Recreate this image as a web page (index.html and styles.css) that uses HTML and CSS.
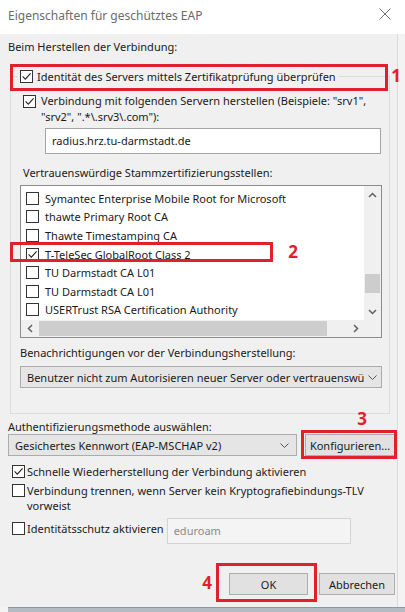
FILE: index.html
```html
<!DOCTYPE html>
<html lang="de">
<head>
  <meta charset="UTF-8" />
  <meta name="viewport" content="width=device-width, initial-scale=1.0"/>
  <title>Eigenschaften für geschütztes EAP</title>
  <link rel="stylesheet" href="styles.css">
</head>
<body>
  <div class="window">
    <div class="titlebar">
      <span class="title">Eigenschaften für geschütztes EAP</span>
      <svg class="close" viewBox="0 0 12 12"><path d="M0.5 0.5L11.5 11.5M11.5 0.5L0.5 11.5"/></svg>
    </div>

    <div class="dialog">
      <p class="label intro">Beim Herstellen der Verbindung:</p>

      <div class="group">
        <div class="group-head">
          <span class="cb"><svg viewBox="0 0 11 11"><path d="M1.6 5.4L4.3 8.2L9.6 2.4"/></svg></span>
          <span>Identität des Servers mittels Zertifikatprüfung überprüfen</span>
        </div>

        <div class="check servers">
          <span class="cb"><svg viewBox="0 0 11 11"><path d="M1.6 5.4L4.3 8.2L9.6 2.4"/></svg></span>
          <span class="check-text">Verbindung mit folgenden Servern herstellen (Beispiele: "srv1",<br>"srv2", ".*\.srv3\.com"):</span>
        </div>
        <div class="textbox server-input">radius.hrz.tu-darmstadt.de</div>

        <p class="label ca-label">Vertrauenswürdige Stammzertifizierungsstellen:</p>
        <div class="listbox">
          <ul class="ca-list">
            <li><span class="cb"></span>Symantec Enterprise Mobile Root for Microsoft</li>
            <li><span class="cb"></span>thawte Primary Root CA</li>
            <li><span class="cb"></span>Thawte Timestamping CA</li>
            <li><span class="cb"><svg viewBox="0 0 11 11"><path d="M1.6 5.4L4.3 8.2L9.6 2.4"/></svg></span>T-TeleSec GlobalRoot Class 2</li>
            <li><span class="cb"></span>TU Darmstadt CA L01</li>
            <li><span class="cb"></span>TU Darmstadt CA L01</li>
            <li><span class="cb"></span>USERTrust RSA Certification Authority</li>
          </ul>
          <div class="vscroll">
            <span class="arrow"><svg viewBox="0 0 9 6"><path d="M1 5L4.5 1.5L8 5"/></svg></span>
            <span class="spacer"></span>
            <span class="thumb"></span>
            <span class="arrow"><svg viewBox="0 0 9 6"><path d="M1 1L4.5 4.5L8 1"/></svg></span>
          </div>
          <div class="hscroll">
            <span class="arrow"><svg class="side" viewBox="0 0 6 9"><path d="M5 1L1.5 4.5L5 8"/></svg></span>
            <span class="thumb"></span>
            <span class="spacer"></span>
            <span class="arrow"><svg class="side" viewBox="0 0 6 9"><path d="M1 1L4.5 4.5L1 8"/></svg></span>
          </div>
          <div class="corner"></div>
        </div>

        <p class="label notify-label">Benachrichtigungen vor der Verbindungsherstellung:</p>
        <div class="select notify">
          <span class="select-text">Benutzer nicht zum Autorisieren neuer Server oder vertrauenswü</span>
          <svg class="chevron" viewBox="0 0 9 5"><path d="M0.5 0.5L4.5 4.5L8.5 0.5"/></svg>
        </div>
      </div>

      <p class="label auth-label">Authentifizierungsmethode auswählen:</p>
      <div class="auth-row">
        <div class="select auth">
          <span class="select-text">Gesichertes Kennwort (EAP-MSCHAP v2)</span>
          <svg class="chevron" viewBox="0 0 9 5"><path d="M0.5 0.5L4.5 4.5L8.5 0.5"/></svg>
        </div>
        <button class="btn configure">Konfigurieren...</button>
      </div>

      <div class="check fast">
        <span class="cb"><svg viewBox="0 0 11 11"><path d="M1.6 5.4L4.3 8.2L9.6 2.4"/></svg></span>
        <span class="check-text">Schnelle Wiederherstellung der Verbindung aktivieren</span>
      </div>
      <div class="check tlv">
        <span class="cb"></span>
        <span class="check-text">Verbindung trennen, wenn Server kein Kryptografiebindungs-TLV<br>vorweist</span>
      </div>
      <div class="check identity">
        <span class="cb"></span>
        <span class="check-text">Identitätsschutz aktivieren</span>
        <div class="textbox disabled">eduroam</div>
      </div>

      <div class="actions">
        <button class="btn ok">OK</button>
        <button class="btn cancel">Abbrechen</button>
      </div>
    </div>
    <div class="taskbar"></div>

    <!-- annotations -->
    <div class="mark mark-1"></div>
    <div class="num num-1">1</div>
    <div class="mark mark-2"></div>
    <div class="num num-2">2</div>
    <div class="mark mark-3"></div>
    <div class="num num-3">3</div>
    <div class="mark mark-4"></div>
    <div class="num num-4">4</div>
  </div>
</body>
</html>
```

FILE: styles.css
```css
* {
  box-sizing: border-box;
}

body {
  margin: 0;
  background: #f3f3f3;
  font-family: "Noto Sans", "Segoe UI", sans-serif;
  font-size: 11px;
  color: #1a1a1a;
}

.window {
  position: relative;
  width: 405px;
  height: 612px;
  display: flex;
  flex-direction: column;
  background: #f3f3f3;
  overflow: hidden;
}

.titlebar {
  height: 34px;
  flex: none;
  background: #fff;
  display: flex;
  align-items: flex-start;
  justify-content: space-between;
  padding: 0 14px 0 8px;
}

.title {
  margin-top: 8px;
  font-size: 12px;
  line-height: 16px;
  color: #6b6b6b;
}

.close {
  margin-top: 8px;
  width: 12px;
  height: 12px;
  fill: none;
  stroke: #707070;
  stroke-width: 1;
}

.dialog {
  flex: 1;
  width: 398px;
  background: #f0f0f0;
  border-right: 1px solid #dadada;
  padding: 5px 2px 0 8px;
}

.label {
  margin: 0;
  line-height: 16px;
}

/* checkbox */
.cb {
  flex: none;
  width: 13px;
  height: 13px;
  border: 1px solid #333;
  background: #fff;
}

.cb svg {
  display: block;
  width: 11px;
  height: 11px;
  fill: none;
  stroke: #222;
  stroke-width: 1.1;
}

/* group box */
.group {
  margin: 21px 5px 0 2px;
  border: 1px solid #dcdcdc;
  padding: 0 9px 25px 9px;
}

.group-head {
  display: flex;
  align-items: center;
  gap: 4px;
  width: fit-content;
  height: 17px;
  margin: -9px 0 0 -2px;
  padding: 0 2px;
  background: #f0f0f0;
  line-height: 17px;
}

.check {
  display: flex;
  align-items: flex-start;
  line-height: 15px;
}

.check .cb {
  margin-top: 1px;
}

.servers {
  margin: 8px 0 0 3px;
  gap: 5px;
  line-height: 16px;
}

.servers .cb {
  margin-top: 2px;
}

.textbox {
  background: #fff;
  border: 1px solid #a5a5a5;
  height: 26px;
  line-height: 24px;
  padding: 0 6px;
}

.server-input {
  margin: 3px 0 0 25px;
  width: 336px;
}

.ca-label {
  margin: 11px 0 0 3px;
}

/* list of root CAs */
.listbox {
  margin-top: 4px;
  width: 362px;
  height: 153px;
  border: 1px solid #8c8c8c;
  background: #fff;
  display: grid;
  grid-template-columns: 1fr 17px;
  grid-template-rows: 1fr 17px;
}

.ca-list {
  list-style: none;
  margin: 0;
  padding: 3px 0 0 5px;
  overflow: hidden;
}

.ca-list li {
  display: flex;
  align-items: center;
  gap: 6px;
  height: 18.6px;
  white-space: nowrap;
}

.vscroll, .hscroll, .corner {
  background: #f0f0f0;
}

.vscroll {
  display: flex;
  flex-direction: column;
}

.hscroll {
  display: flex;
}

.arrow {
  flex: none;
  width: 17px;
  height: 17px;
  display: flex;
  align-items: center;
  justify-content: center;
}

.arrow svg {
  width: 9px;
  height: 6px;
  fill: none;
  stroke: #606060;
  stroke-width: 1.5;
}

.arrow svg.side {
  width: 6px;
  height: 9px;
}

.spacer {
  flex: 1;
}

.vscroll .thumb {
  height: 19px;
  margin: 0 1px 10px;
  background: #cdcdcd;
}

.hscroll .thumb {
  width: 288px;
  margin: 1px 0 1px 1px;
  background: #cdcdcd;
}

.notify-label {
  margin-top: 7px;
}

/* dropdowns */
.select {
  display: flex;
  align-items: center;
  height: 22px;
  background: #e5e5e5;
  border: 1px solid #acacac;
  padding: 0 7px 0 6px;
}

.select-text {
  flex: 1;
  white-space: nowrap;
}

.chevron {
  flex: none;
  width: 9px;
  height: 5px;
  margin-left: 4px;
  fill: none;
  stroke: #555;
  stroke-width: 1;
}

.notify {
  margin-top: 5px;
  width: 362px;
}

.auth-label {
  margin-top: 6px;
  line-height: 14px;
}

.auth-row {
  display: flex;
  gap: 8px;
}

.auth {
  width: 289px;
}

.btn {
  font: inherit;
  color: #1a1a1a;
  height: 22px;
  padding: 0;
  background: #e1e1e1;
  border: 1px solid #adadad;
}

.configure {
  width: 90px;
}

.fast {
  margin: 8px 0 0 4px;
  gap: 2px;
}

.tlv {
  margin: 4px 0 0 4px;
  gap: 2px;
}

.identity {
  margin: 5px 0 0 4px;
  gap: 2px;
}

.identity .cb {
  margin-top: 4px;
}

.identity .check-text {
  margin-top: 3px;
}

.textbox.disabled {
  width: 184px;
  margin-left: 1px;
  background: #f4f4f4;
  border-color: #d4d4d4;
  color: #8a8a8a;
}

.actions {
  display: flex;
  justify-content: flex-end;
  gap: 11px;
  margin-top: 29px;
}

.ok {
  width: 79px;
}

.cancel {
  width: 76px;
}

.taskbar {
  flex: none;
  height: 5px;
  margin-left: 8px;
  background: #b4bbc2;
  border-top: 1px solid #8f979f;
}

/* red annotations */
.mark {
  position: absolute;
  border: 3px solid #e0202a;
}

.num {
  position: absolute;
  width: 14px;
  height: 20px;
  line-height: 20px;
  text-align: center;
  font-size: 17px;
  font-weight: bold;
  color: #e0202a;
}

.mark-1 { left: 10px; top: 64px; width: 378px; height: 27px; }
.num-1 { left: 389px; top: 66px; }
.mark-2 { left: 10px; top: 242px; width: 263px; height: 20px; }
.num-2 { left: 286px; top: 242px; }
.mark-3 { left: 301px; top: 430px; width: 96px; height: 29px; }
.num-3 { left: 355px; top: 409px; }
.mark-4 { left: 216px; top: 563px; width: 101px; height: 39px; }
.num-4 { left: 200px; top: 573px; }
```
